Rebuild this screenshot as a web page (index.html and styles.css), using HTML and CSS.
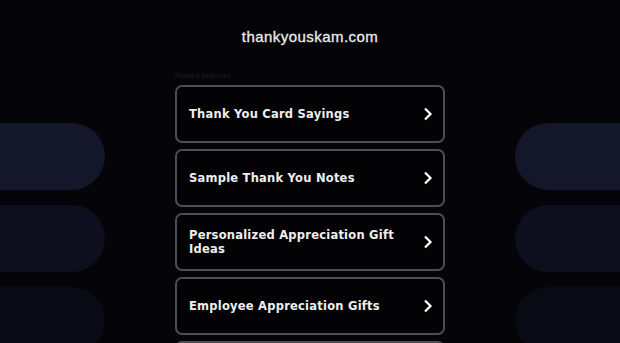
FILE: index.html
```html
<!DOCTYPE html>
<html lang="en">
<head>
    <meta charset="UTF-8">
    <title>thankyouskam.com</title>
    <link rel="stylesheet" href="styles.css">
</head>
<body>
<div class="page">
    <div class="side side--left">
        <div class="side__pill side__pill--1"></div>
        <div class="side__pill side__pill--2"></div>
        <div class="side__pill side__pill--3"></div>
    </div>
    <div class="main">
        <h1 class="main__domain">thankyouskam.com</h1>
        <div class="main__label">Related Searches</div>
        <div class="links">
            <a class="links__item" href="#">
                <span class="links__text">Thank You Card Sayings</span>
                <svg class="links__arrow" viewBox="0 0 10 14" width="10" height="14"><path d="M2 1.5 L7.5 7 L2 12.5" fill="none" stroke="#fff" stroke-width="2.2"/></svg>
            </a>
            <a class="links__item" href="#">
                <span class="links__text">Sample Thank You Notes</span>
                <svg class="links__arrow" viewBox="0 0 10 14" width="10" height="14"><path d="M2 1.5 L7.5 7 L2 12.5" fill="none" stroke="#fff" stroke-width="2.2"/></svg>
            </a>
            <a class="links__item" href="#">
                <span class="links__text">Personalized Appreciation Gift Ideas</span>
                <svg class="links__arrow" viewBox="0 0 10 14" width="10" height="14"><path d="M2 1.5 L7.5 7 L2 12.5" fill="none" stroke="#fff" stroke-width="2.2"/></svg>
            </a>
            <a class="links__item" href="#">
                <span class="links__text">Employee Appreciation Gifts</span>
                <svg class="links__arrow" viewBox="0 0 10 14" width="10" height="14"><path d="M2 1.5 L7.5 7 L2 12.5" fill="none" stroke="#fff" stroke-width="2.2"/></svg>
            </a>
            <a class="links__item" href="#">
                <span class="links__text">Thank You Messages</span>
                <svg class="links__arrow" viewBox="0 0 10 14" width="10" height="14"><path d="M2 1.5 L7.5 7 L2 12.5" fill="none" stroke="#fff" stroke-width="2.2"/></svg>
            </a>
        </div>
    </div>
    <div class="side side--right">
        <div class="side__pill side__pill--1"></div>
        <div class="side__pill side__pill--2"></div>
        <div class="side__pill side__pill--3"></div>
    </div>
</div>
</body>
</html>
```

FILE: styles.css
```css
html,
body {
    margin: 0;
    padding: 0;
    width: 100%;
    height: 100%;
    background: #050509;
    overflow: hidden;
}

.page {
    display: grid;
    grid-template-columns: 105px 1fr 105px;
    width: 100%;
    height: 100%;
}

.side {
    display: flex;
    flex-direction: column;
    gap: 15px;
    padding-top: 123px;
}

.side__pill {
    flex: none;
    height: 67px;
}

.side--left .side__pill {
    border-radius: 0 34px 34px 0;
}

.side--right .side__pill {
    border-radius: 34px 0 0 34px;
}

.side__pill--1 {
    background: #141729;
}

.side__pill--2 {
    background: #0d0f1e;
}

.side__pill--3 {
    background: #080a14;
}

.main {
    display: flex;
    flex-direction: column;
    align-items: center;
}

.main__domain {
    margin: 28px 0 0;
    color: #ececec;
    font-family: "Liberation Sans", Arial, sans-serif;
    font-size: 15px;
    font-weight: 400;
    letter-spacing: .03em;
    line-height: 17px;
    -webkit-text-stroke: .3px #ececec;
}

.main__label {
    width: 270px;
    margin-top: 26px;
    color: #1c1c24;
    font-family: "Liberation Sans", Arial, sans-serif;
    font-size: 7px;
    line-height: 9px;
}

.links {
    display: flex;
    flex-direction: column;
    gap: 6px;
    width: 270px;
    margin-top: 5px;
}

.links__item {
    display: flex;
    align-items: center;
    justify-content: space-between;
    box-sizing: border-box;
    height: 58px;
    padding: 0 10px 0 12px;
    border: 2px solid #4d4d52;
    border-radius: 7px;
    background: #030305;
    color: #eee;
    text-decoration: none;
}

.links__text {
    max-width: 215px;
    font-family: "DejaVu Sans", Verdana, sans-serif;
    font-size: 11.5px;
    font-weight: 700;
    letter-spacing: .02em;
    line-height: 14px;
}

.links__arrow {
    flex: none;
}
```
